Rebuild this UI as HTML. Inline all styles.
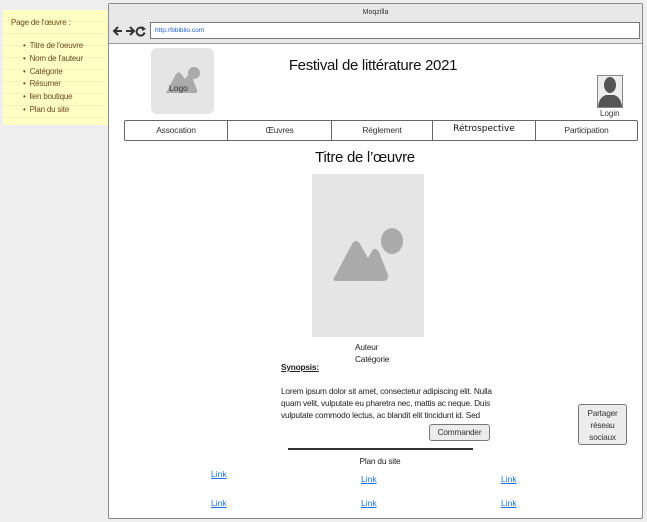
<!DOCTYPE html>
<html><head><meta charset="utf-8"><style>
*{margin:0;padding:0;box-sizing:border-box}
body{width:647px;height:522px;background:#eeeeee;font-family:"Liberation Sans",sans-serif;position:relative;overflow:hidden;color:#222}
.a{position:absolute}
.note{left:3px;top:10px;width:105px;height:115px;background:repeating-linear-gradient(#ffffc4 0 11px,#f6f2bc 11px 12px);font-size:8px;letter-spacing:-0.2px;color:#6b4a1a}
.note ul{list-style:none;position:absolute;left:20px;top:30px;line-height:12.8px}
.note li:before{content:"•";margin-right:4px}
.frame{left:108px;top:3px;width:535px;height:516px;border:1px solid #8a8a8a;border-radius:2px;background:#fff}
.tb{left:0;top:0;width:533px;height:40px;background:#e8e8e8;border-bottom:1px solid #999}
.nav{left:124px;top:120px;width:514px;height:21px;border:1px solid #666;border-radius:2px;display:flex;background:#fff}
.nav div{border-right:1px solid #666;font-size:8.5px;letter-spacing:-0.2px;text-align:center;line-height:19px;color:#333}
.nav div:last-child{border-right:none}
.lk{color:#1a73e8;text-decoration:underline;font-size:8.5px}
.btn{background:#ececec;border:1px solid #777;border-radius:3px;font-size:8.5px;text-align:center;color:#333}
.t{font-size:8.3px;letter-spacing:-0.2px}
</style></head><body>
<div class="a note">
<div class="a" style="left:8px;top:8px">Page de l'œuvre :</div>
<ul><li>Titre de l'oeuvre</li><li>Nom de l'auteur</li><li>Catégorie</li><li>Résumer</li><li>lien boutique</li><li>Plan du site</li></ul>
</div>
<div class="a frame">
<div class="a tb">
<div class="a" style="left:0;width:533px;top:5px;text-align:center;font-size:7px;color:#333">Moqzilla</div>
<svg class="a" style="left:3px;top:21px" width="36" height="12"><g stroke="#333" stroke-width="2" fill="none"><path d="M10 6H2M6 2L2 6L6 10"/><path d="M14 6H22M18 2L22 6L18 10"/><path d="M32 4.5A4 4 0 1 0 32.5 7.5"/></g><path d="M30 1L34 4L30 6Z" fill="#333"/></svg>
<div class="a" style="left:41px;top:18px;width:490px;height:17px;border:1px solid #777;background:#fff;font-size:6.5px;color:#1a5fd0;padding:4px 0 0 4px">http://bbiblio.com</div>
</div>
</div>
<div class="a" style="left:151px;top:48px;width:63px;height:66px;background:#e5e5e5;border-radius:6px"></div>
<svg class="a" style="left:151px;top:48px" width="63" height="66"><path d="M15 45 L25 26 Q28 22 31 27 L34 31 L37 27 Q39 25 41 29 L46 42 Q47 45 44 45 Z" fill="#aaa"/><circle cx="43" cy="25" r="6" fill="#aaa"/><text x="18" y="43" font-size="8.5" fill="#333" font-family="Liberation Sans">Logo</text></svg>
<div class="a" style="left:250px;top:57px;width:246px;text-align:center;font-size:15px;letter-spacing:-0.3px;color:#111">Festival de littérature 2021</div>
<svg class="a" style="left:597px;top:75px" width="26" height="33"><rect x="0.5" y="0.5" width="25" height="32" fill="#eee" stroke="#888"/><ellipse cx="13" cy="10" rx="6" ry="8" fill="#555"/><path d="M1 32 Q2 22 9 20 L17 20 Q24 22 25 32 Z" fill="#555"/></svg>
<div class="a" style="left:600px;top:109px;font-size:8px;color:#333">Login</div>
<div class="a nav"><div style="width:103px">Assocation</div><div style="width:104px">Œuvres</div><div style="width:101px">Réglement</div><div style="width:103px;font-family:'DejaVu Sans',sans-serif;font-size:9px;letter-spacing:0;line-height:17px;color:#111">Rétrospective</div><div style="flex:1">Participation</div></div>
<div class="a" style="left:260px;top:149px;width:210px;text-align:center;font-size:15px;letter-spacing:-0.3px;color:#111">Titre de l’œuvre</div>
<div class="a" style="left:312px;top:174px;width:112px;height:163px;background:#e5e5e5"></div>
<svg class="a" style="left:312px;top:174px" width="112" height="163"><path d="M22 104 L40 70 Q44 64 48 70 L56 84 L60 77 Q63 72 67 78 L76 101 Q77 107 71 107 L25 107 Q20 107 22 104 Z" fill="#aaa"/><ellipse cx="80" cy="67" rx="11" ry="13" fill="#aaa"/></svg>
<div class="a t" style="left:355px;top:341px;line-height:12px">Auteur<br>Catégorie</div>
<div class="a t" style="left:281px;top:362px;font-weight:bold;text-decoration:underline">Synopsis:</div>
<div class="a t" style="left:281px;top:385px;width:225px;line-height:12px">Lorem ipsum dolor sit amet, consectetur adipiscing elit. Nulla quam velit, vulputate eu pharetra nec, mattis ac neque. Duis vulputate commodo lectus, ac blandit elit tincidunt id. Sed</div>
<div class="a btn t" style="left:429px;top:424px;width:61px;height:17px;line-height:15px">Commander</div>
<div class="a" style="left:288px;top:448px;width:185px;height:2px;background:#333"></div>
<div class="a t" style="left:330px;top:456px;width:100px;text-align:center">Plan du site</div>
<a class="a lk" style="left:211px;top:469px">Link</a>
<a class="a lk" style="left:361px;top:474px">Link</a>
<a class="a lk" style="left:501px;top:474px">Link</a>
<a class="a lk" style="left:211px;top:498px">Link</a>
<a class="a lk" style="left:361px;top:498px">Link</a>
<a class="a lk" style="left:501px;top:498px">Link</a>
<div class="a btn t" style="left:578px;top:404px;width:49px;height:41px;line-height:12px;padding-top:2px">Partager<br>réseau<br>sociaux</div>
</body></html>
